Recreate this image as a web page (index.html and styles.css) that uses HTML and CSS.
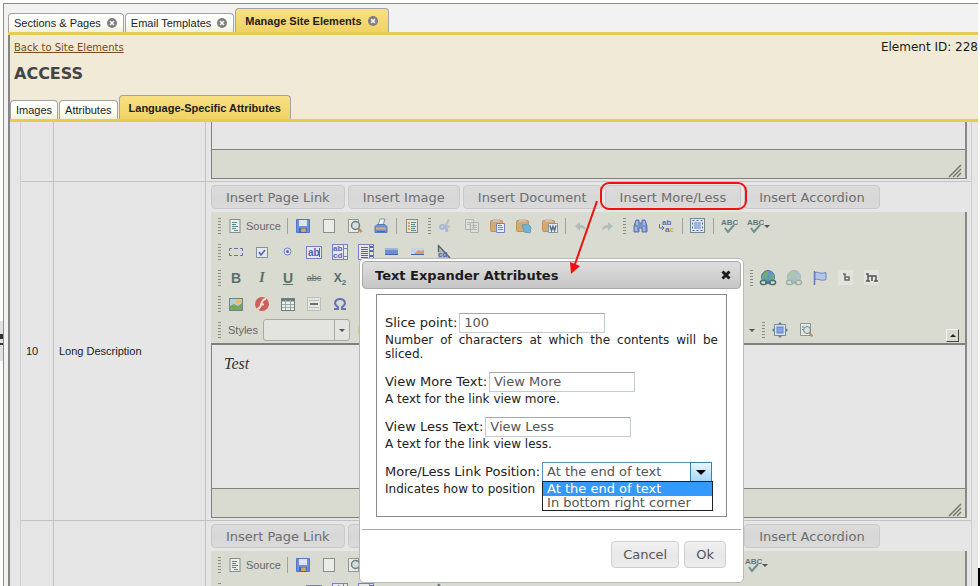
FILE: index.html
```html
<!DOCTYPE html>
<html lang="en">
<head>
<meta charset="utf-8">
<title>Manage Site Elements</title>
<link rel="stylesheet" href="styles.css">
</head>
<body>
<svg class="sprite" aria-hidden="true">
  <symbol id="i-source" viewBox="0 0 18 18"><rect x="4" y="2.500" width="10" height="13" fill="#eceeea" stroke="#829092"/><path d="M6 5.500h5M6 7.500h4M6 9.500h6M6 11.500h4M8 13.500h4" stroke="#5f8488"/></symbol>
  <symbol id="i-save" viewBox="0 0 18 18"><path d="M2.500 2.500h13v13h-13z" fill="#6a90dc" stroke="#5478c4"/><rect x="5" y="3" width="8" height="6" fill="#dde5f0"/><rect x="5" y="11" width="8" height="5" fill="#4c68a4"/><rect x="7" y="11.500" width="5" height="3.500" fill="#e0a14e"/></symbol>
  <symbol id="i-new" viewBox="0 0 18 18"><rect x="3.500" y="2.500" width="11" height="13" fill="#ebece6" stroke="#899092"/></symbol>
  <symbol id="i-preview" viewBox="0 0 18 18"><path d="M2.500 2.500h10v13h-10z" fill="#ebece6" stroke="#8d9799"/><circle cx="9.500" cy="8.500" r="4" fill="#d3dde0" stroke="#6c7e82" stroke-width="1.500"/><path d="M12.500 11.500l3 3.500" stroke="#c98a4b" stroke-width="2.500"/></symbol>
  <symbol id="i-print" viewBox="0 0 18 18"><path d="M6 8l2-6h5l-2 6z" fill="#edf0f2" stroke="#8295ad"/><path d="M3 9.500l2-2h8l2 2v6H3z" fill="#6f91cf" stroke="#5a7bbb"/><path d="M4 11.500h10" stroke="#d8b16b" stroke-width="2"/><path d="M5 14.500h8" stroke="#456ab0"/></symbol>
  <symbol id="i-template" viewBox="0 0 18 18"><rect x="3.500" y="2.500" width="11" height="13" fill="#e4e6df" stroke="#829092"/><path d="M8 5.500h5M8 7.500h4M8 9.500h5M8 11.500h4M8 13.500h5" stroke="#5f8488"/><path d="M6 5v9" stroke="#d8a553" stroke-width="2" stroke-dasharray="2 1"/></symbol>
  <symbol id="i-cut" viewBox="0 0 18 18"><path d="M12 2l-4 8M6 8l7 2" stroke="#b4bfc6" stroke-width="2"/><circle cx="5" cy="10" r="2" fill="none" stroke="#a9b6d8" stroke-width="2"/><path d="M9 10l1 5" stroke="#a9b6d8" stroke-width="3"/></symbol>
  <symbol id="i-copy" viewBox="0 0 18 18"><path d="M2.500 2.500h8v10h-8zM7.500 5.500h8v10h-8z" fill="#dedfd8" stroke="#afb6b2"/><path d="M4 5.500h4M4 7.500h3M9 8.500h5M9 10.500h5M9 12.500h5" stroke="#b4bcba"/></symbol>
  <symbol id="i-paste" viewBox="0 0 18 18"><rect x="1.500" y="3.500" width="12" height="11" rx="1" fill="#d6a970" stroke="#c0935c"/><rect x="4" y="2" width="7" height="3" fill="#bec3c5"/><path d="M7.500 6.500h8v9h-8z" fill="#e9edf4" stroke="#6f86b8"/><path d="M9 8.500h4M9 10.500h5M9 12.500h5" stroke="#6f86b8"/></symbol>
  <symbol id="i-pastetext" viewBox="0 0 18 18"><rect x="1.500" y="3.500" width="12" height="11" rx="1" fill="#d6a970" stroke="#c0935c"/><rect x="4" y="2" width="7" height="3" fill="#bec3c5"/><path d="M7 8l6-1 3 3-1 6-6-1z" fill="#70b3d2" stroke="#679db9"/></symbol>
  <symbol id="i-pasteword" viewBox="0 0 18 18"><rect x="1.500" y="3.500" width="12" height="11" rx="1" fill="#d6a970" stroke="#c0935c"/><rect x="4" y="2" width="7" height="3" fill="#bec3c5"/><path d="M7.500 6.500h9v9h-9z" fill="#e9edf4" stroke="#8395a6"/><path d="M9 8.500l1.500 5 1.500-4 1.500 4 1.500-5" fill="none" stroke="#596b93" stroke-width="1.500"/></symbol>
  <symbol id="i-undo" viewBox="0 0 18 18"><path d="M3 9l5-4v3c4 0 6 2 6 6-1-2-3-3-6-3v3z" fill="#b5bdb8"/></symbol>
  <symbol id="i-redo" viewBox="0 0 18 18"><path d="M15 9l-5-4v3c-4 0-6 2-6 6 1-2 3-3 6-3v3z" fill="#b5bdb8"/></symbol>
  <symbol id="i-find" viewBox="0 0 18 18"><path d="M4 3h3v3h3V3h3l2 6v6h-5v-4H7v4H2V9z" fill="#7b93cd" stroke="#5c74b4"/><path d="M5 4v4M12 4v4M4 10v4M12 10v4" stroke="#d0dbef"/></symbol>
  <symbol id="i-replace" viewBox="0 0 18 18"><text x="4" y="8" class="glyph-sm" fill="#5d6da9">ab</text><text x="7" y="15" class="glyph-sm" fill="#5d6da9">a<tspan fill="#d5a254">c</tspan></text><path d="M1.500 7v4h4M4 9l2 2-2 2" fill="none" stroke="#5d6da9"/></symbol>
  <symbol id="i-selectall" viewBox="0 0 18 18"><rect x="1.500" y="1.500" width="14" height="14" fill="#e4e8e8" stroke="#74898c"/><rect x="5" y="5" width="7" height="7" fill="#9db6e0"/><rect x="3.500" y="3.500" width="10" height="10" fill="none" stroke="#516f9f" stroke-dasharray="2 2"/></symbol>
  <symbol id="i-spell" viewBox="0 0 18 18"><text x="1" y="8" class="glyph-abc" fill="#5e7a7d">ABC</text><path d="M5 11l3 4 6-7" fill="none" stroke="#6d8f90" stroke-width="2"/></symbol>
  <symbol id="i-form" viewBox="0 0 18 18"><path d="M5 5.500H2.500V8M7 5.500h4M13 5.500h2.500V8M2.500 10v2.500H5M7 12.500h4M13 12.500h2.500V10" fill="none" stroke="#6670b2"/></symbol>
  <symbol id="i-check" viewBox="0 0 18 18"><rect x="3.500" y="4.500" width="11" height="10" fill="#e6e8ec" stroke="#7d90b0"/><path d="M6 9l2 3 4-5" fill="none" stroke="#5760b4" stroke-width="1.500"/></symbol>
  <symbol id="i-radio" viewBox="0 0 18 18"><circle cx="8.500" cy="8.500" r="3.500" fill="#e6e8ec" stroke="#7680c8"/><circle cx="8.500" cy="8.500" r="1.500" fill="#5760b4"/></symbol>
  <symbol id="i-text" viewBox="0 0 18 18"><rect x="1.500" y="3.500" width="15" height="12" fill="#e6e8ec" stroke="#7680c8"/><text x="3" y="13" class="glyph-md" fill="#5760b4">ab</text><path d="M14.500 5v9" stroke="#5760b4"/></symbol>
  <symbol id="i-area" viewBox="0 0 18 18"><rect x="1.500" y="1.500" width="15" height="15" fill="#e6e8ec" stroke="#7680c8"/><text x="2" y="8" class="glyph-sm" fill="#5760b4">ab</text><text x="2" y="15" class="glyph-sm" fill="#5760b4">cd</text><path d="M12.500 2v14M13 5.500h3M13 13.500h3" stroke="#7680c8"/></symbol>
  <symbol id="i-select" viewBox="0 0 18 18"><rect x="1.500" y="1.500" width="15" height="15" fill="#e6e8ec" stroke="#7680c8"/><path d="M4 4.500h7M4 6.500h7M4 8.500h7M4 10.500h7M4 12.500h7M4 14.500h7" stroke="#5760b4"/><path d="M12.500 2v14" stroke="#7680c8"/><path d="M13 4h3M13 8h3M13 13h3" stroke="#5760b4" stroke-width="2"/></symbol>
  <symbol id="i-button" viewBox="0 0 18 18"><path d="M2 5h13v7H2z" fill="#6f8fcc"/><path d="M2 5h13v2H2z" fill="#9fb5de"/><path d="M2 11h13v1H2z" fill="#4565b0"/></symbol>
  <symbol id="i-imgbutton" viewBox="0 0 18 18"><path d="M2 5h13v7H2z" fill="#c6d3e4"/><path d="M5 11l4-4 3 1 3-1v4z" fill="#d8a060"/><path d="M2 11h13v1H2z" fill="#4565b0"/></symbol>
  <symbol id="i-hidden" viewBox="0 0 18 18"><path d="M3 2l12 13H3z" fill="#b1b8c6"/><text x="3" y="14" class="glyph-sm" fill="#5760b4">cd</text><path d="M3 2l12 13M3.500 3v6" stroke="#5a6876" stroke-width="1.500"/></symbol>
  <symbol id="i-image" viewBox="0 0 18 18"><rect x="2.500" y="3.500" width="13" height="12" fill="#b4cfe0" stroke="#6f8585"/><path d="M3 15v-4l4-2 4 2 4-3v7z" fill="#7aa658"/><rect x="9" y="5" width="5" height="3" fill="#e5bd60"/></symbol>
  <symbol id="i-flash" viewBox="0 0 18 18"><circle cx="9" cy="9" r="7" fill="#c9605a"/><path d="M13 4c-4 0-4 3-5 6s-2 4-4 4M7 9.500h4" fill="none" stroke="#f1dcd6" stroke-width="2"/></symbol>
  <symbol id="i-table" viewBox="0 0 18 18"><rect x="2.500" y="3.500" width="13" height="12" fill="#eceeea" stroke="#6c7c80"/><path d="M2 5h14" stroke="#6c7c80" stroke-width="3"/><path d="M6.500 5v10M11.500 5v10M3 9.500h12M3 12.500h12" stroke="#9daaab"/></symbol>
  <symbol id="i-rule" viewBox="0 0 18 18"><rect x="2.500" y="2.500" width="13" height="13" fill="#e4e5df" stroke="#b9bfbe"/><path d="M4 5.500h10M4 12.500h10" stroke="#b9bfbe"/><path d="M5 9h8" stroke="#60777a" stroke-width="2"/></symbol>
  <symbol id="i-omega" viewBox="0 0 18 18"><path d="M3 14h4v-2C2 9 4 4 9 4s7 5 2 8v2h4" fill="none" stroke="#6270b8" stroke-width="2"/></symbol>
  <symbol id="i-link" viewBox="0 0 18 18"><circle cx="9" cy="8" r="6.500" fill="#6394d0" stroke="#527c9a"/><path d="M5 4l3-2 2 3-3 4-4 1zM11 6l4-1v5l-3 1z" fill="#6fb068"/><rect x="1.500" y="11.500" width="6" height="4" rx="2" fill="#d3e0dc" stroke="#47706c" stroke-width="1.500"/><rect x="10.500" y="11.500" width="6" height="4" rx="2" fill="#d3e0dc" stroke="#47706c" stroke-width="1.500"/><path d="M6 13.500h6" stroke="#47706c" stroke-width="1.500"/></symbol>
  <symbol id="i-flag" viewBox="0 0 18 18"><path d="M3.500 2v14" stroke="#6378b4" stroke-width="1.500"/><path d="M4 3.500c4-1 5 2 11 0v7c-5 2-7-1-11 0z" fill="#b1c5e6" stroke="#6e85c2"/></symbol>
  <symbol id="i-glyph-b" viewBox="0 0 18 18"><rect x="1" y="1" width="15" height="15" fill="#e3e3dd"/><path d="M6 5h2v6h4V8H8" fill="none" stroke="#666" stroke-width="1.500"/></symbol>
  <symbol id="i-glyph-m" viewBox="0 0 18 18"><rect x="1" y="1" width="15" height="15" fill="#e3e3dd"/><path d="M3 5h2v7M5 7h4v5M9 7h4v5M3 12h4M11 12h4" fill="none" stroke="#555" stroke-width="1.500"/></symbol>
  <symbol id="i-maximize" viewBox="0 0 18 18"><path d="M9 1l3 3H6zM9 17l3-3H6zM1 9l3-3v6zM17 9l-3-3v6z" fill="#668591"/><rect x="3.500" y="3.500" width="11" height="11" fill="#dce4e9" stroke="#708c9b"/><rect x="6" y="6" width="6" height="6" fill="#83a7e4" stroke="#5b83ca"/></symbol>
  <symbol id="i-blocks" viewBox="0 0 18 18"><path d="M3.500 2.500h10v12h-10z" fill="#e6e8e2" stroke="#8b9698"/><path d="M5 6h2M5 8.500h3" stroke="#6c8082"/><circle cx="10" cy="9" r="3.500" fill="#d5e0e0" stroke="#758789"/><path d="M12.500 12l3 3.500" stroke="#c98a4b" stroke-width="2"/></symbol>
  <symbol id="i-close" viewBox="0 0 12 12"><circle cx="6" cy="6" r="5" fill="#7f7f7f"/><path d="M4 4l4 4M8 4L4 8" stroke="#fff" stroke-width="1.500"/></symbol>
  <symbol id="i-resize" viewBox="0 0 14 14"><path d="M1 13L13 1M5 13l8-8M9 13l4-4" stroke="#77786c" stroke-width="1.500"/></symbol>
</svg>

<main class="page">
  <div class="frame">
    <nav class="tabs tabs--main" aria-label="Site tabs">
      <a class="tab" href="#pages">Sections &amp; Pages <svg class="tab__x"><use href="#i-close"/></svg></a>
      <a class="tab" href="#email">Email Templates <svg class="tab__x"><use href="#i-close"/></svg></a>
      <a class="tab tab--active" href="#elements">Manage Site Elements <svg class="tab__x"><use href="#i-close"/></svg></a>
    </nav>
    <div class="panel">
      <header class="head">
        <div class="head__row">
          <a class="back" href="#back">Back to Site Elements</a>
          <span class="element-id">Element ID: 228</span>
        </div>
        <h1>ACCESS</h1>
      </header>
      <nav class="tabs tabs--sub" aria-label="Element tabs">
        <a class="tab" href="#images">Images</a>
        <a class="tab" href="#attributes">Attributes</a>
        <a class="tab tab--active" href="#language">Language-Specific Attributes</a>
      </nav>
      <div class="content">
        <table class="grid">
          <colgroup><col class="col-num"><col class="col-name"><col></colgroup>
          <tbody>
          <tr>
            <td></td><td></td>
            <td class="cell-editor cell-editor--tail">
              <div class="editor">
                <div class="editor__body editor__body--tail"></div>
                <div class="editor__foot"><svg class="grab"><use href="#i-resize"/></svg></div>
              </div>
            </td>
          </tr>
          <tr>
            <td>10</td><td>Long Description</td>
            <td class="cell-editor">
              <div class="inserts">
                <button type="button">Insert Page Link</button>
                <button type="button">Insert Image</button>
                <button type="button">Insert Document</button>
                <button type="button">Insert More/Less</button>
                <button type="button">Insert Accordion</button>
              </div>
              <div class="editor">
                <div class="toolbar">
                  <div class="tools">
                    <i class="grip"></i><button type="button" class="tool tool--source"><svg><use href="#i-source"/></svg>Source</button><i class="sep"></i>
                    <button type="button" class="tool" aria-label="Save"><svg><use href="#i-save"/></svg></button>
                    <button type="button" class="tool" aria-label="New page"><svg><use href="#i-new"/></svg></button>
                    <button type="button" class="tool" aria-label="Preview"><svg><use href="#i-preview"/></svg></button>
                    <button type="button" class="tool" aria-label="Print"><svg><use href="#i-print"/></svg></button><i class="sep"></i>
                    <button type="button" class="tool" aria-label="Templates"><svg><use href="#i-template"/></svg></button><i class="grip"></i>
                    <button type="button" class="tool" aria-label="Cut"><svg><use href="#i-cut"/></svg></button>
                    <button type="button" class="tool" aria-label="Copy"><svg><use href="#i-copy"/></svg></button>
                    <button type="button" class="tool" aria-label="Paste"><svg><use href="#i-paste"/></svg></button>
                    <button type="button" class="tool" aria-label="Paste as text"><svg><use href="#i-pastetext"/></svg></button>
                    <button type="button" class="tool" aria-label="Paste from Word"><svg><use href="#i-pasteword"/></svg></button><i class="sep"></i>
                    <button type="button" class="tool" aria-label="Undo"><svg><use href="#i-undo"/></svg></button>
                    <button type="button" class="tool" aria-label="Redo"><svg><use href="#i-redo"/></svg></button><i class="grip"></i>
                    <button type="button" class="tool" aria-label="Find"><svg><use href="#i-find"/></svg></button>
                    <button type="button" class="tool" aria-label="Replace"><svg><use href="#i-replace"/></svg></button><i class="sep"></i>
                    <button type="button" class="tool" aria-label="Select all"><svg><use href="#i-selectall"/></svg></button><i class="sep"></i>
                    <button type="button" class="tool" aria-label="Check spelling"><svg><use href="#i-spell"/></svg></button>
                    <button type="button" class="tool tool--menu" aria-label="Spell check as you type"><svg><use href="#i-spell"/></svg></button>
                  </div>
                  <div class="tools">
                    <i class="grip"></i>
                    <button type="button" class="tool" aria-label="Form"><svg><use href="#i-form"/></svg></button>
                    <button type="button" class="tool" aria-label="Checkbox"><svg><use href="#i-check"/></svg></button>
                    <button type="button" class="tool" aria-label="Radio button"><svg><use href="#i-radio"/></svg></button>
                    <button type="button" class="tool" aria-label="Text field"><svg><use href="#i-text"/></svg></button>
                    <button type="button" class="tool" aria-label="Text area"><svg><use href="#i-area"/></svg></button>
                    <button type="button" class="tool" aria-label="Selection field"><svg><use href="#i-select"/></svg></button>
                    <button type="button" class="tool" aria-label="Button"><svg><use href="#i-button"/></svg></button>
                    <button type="button" class="tool" aria-label="Image button"><svg><use href="#i-imgbutton"/></svg></button>
                    <button type="button" class="tool" aria-label="Hidden field"><svg><use href="#i-hidden"/></svg></button>
                  </div>
                  <div class="tools">
                    <i class="grip"></i>
                    <button type="button" class="tool tool--b">B</button>
                    <button type="button" class="tool tool--i">I</button>
                    <button type="button" class="tool tool--u">U</button>
                    <button type="button" class="tool tool--s">abc</button>
                    <button type="button" class="tool tool--sub"><span>X<sub>2</sub></span></button>
                    <div class="tools__end tools__end--links">
                      <i class="grip"></i>
                      <button type="button" class="tool" aria-label="Link"><svg><use href="#i-link"/></svg></button>
                      <button type="button" class="tool tool--off" aria-label="Unlink" disabled><svg><use href="#i-link"/></svg></button>
                      <button type="button" class="tool" aria-label="Anchor"><svg><use href="#i-flag"/></svg></button>
                      <button type="button" class="tool" aria-label="Less"><svg><use href="#i-glyph-b"/></svg></button>
                      <button type="button" class="tool" aria-label="More"><svg><use href="#i-glyph-m"/></svg></button>
                    </div>
                  </div>
                  <div class="tools">
                    <i class="grip"></i>
                    <button type="button" class="tool" aria-label="Image"><svg><use href="#i-image"/></svg></button>
                    <button type="button" class="tool" aria-label="Flash"><svg><use href="#i-flash"/></svg></button>
                    <button type="button" class="tool" aria-label="Table"><svg><use href="#i-table"/></svg></button>
                    <button type="button" class="tool" aria-label="Horizontal line"><svg><use href="#i-rule"/></svg></button>
                    <button type="button" class="tool" aria-label="Special character"><svg><use href="#i-omega"/></svg></button>
                  </div>
                  <div class="tools">
                    <i class="grip"></i>
                    <label class="styles-label" for="styles">Styles</label>
                    <span class="combo"><select id="styles"><option></option></select></span>
                    <span class="styles-label">F</span>
                    <div class="tools__end tools__end--view">
                      <i class="caret"></i><i class="grip"></i>
                      <button type="button" class="tool" aria-label="Maximize"><svg><use href="#i-maximize"/></svg></button>
                      <button type="button" class="tool" aria-label="Show blocks"><svg><use href="#i-blocks"/></svg></button>
                    </div>
                    <button type="button" class="collapse" aria-label="Collapse toolbar"></button>
                  </div>
                </div>
                <div class="editor__body"><p>Test</p></div>
                <div class="editor__foot"><svg class="grab"><use href="#i-resize"/></svg></div>
              </div>
            </td>
          </tr>
          <tr>
            <td></td><td></td>
            <td class="cell-editor">
              <div class="inserts">
                <button type="button">Insert Page Link</button>
                <button type="button">Insert Image</button>
                <button type="button">Insert Document</button>
                <button type="button">Insert More/Less</button>
                <button type="button">Insert Accordion</button>
              </div>
              <div class="editor">
                <div class="toolbar">
                  <div class="tools">
                    <i class="grip"></i><button type="button" class="tool tool--source"><svg><use href="#i-source"/></svg>Source</button><i class="sep"></i>
                    <button type="button" class="tool" aria-label="Save"><svg><use href="#i-save"/></svg></button>
                    <button type="button" class="tool" aria-label="New page"><svg><use href="#i-new"/></svg></button>
                    <button type="button" class="tool" aria-label="Preview"><svg><use href="#i-preview"/></svg></button>
                    <div class="tools__end tools__end--spell">
                      <button type="button" class="tool tool--menu" aria-label="Spell check as you type"><svg><use href="#i-spell"/></svg></button>
                    </div>
                  </div>
                  <div class="tools">
                    <i class="grip"></i>
                    <button type="button" class="tool" aria-label="Form"><svg><use href="#i-form"/></svg></button>
                    <button type="button" class="tool" aria-label="Checkbox"><svg><use href="#i-check"/></svg></button>
                    <button type="button" class="tool" aria-label="Radio button"><svg><use href="#i-radio"/></svg></button>
                    <button type="button" class="tool" aria-label="Text field"><svg><use href="#i-text"/></svg></button>
                    <button type="button" class="tool" aria-label="Text area"><svg><use href="#i-area"/></svg></button>
                    <button type="button" class="tool" aria-label="Selection field"><svg><use href="#i-select"/></svg></button>
                    <button type="button" class="tool" aria-label="Button"><svg><use href="#i-button"/></svg></button>
                    <button type="button" class="tool" aria-label="Image button"><svg><use href="#i-imgbutton"/></svg></button>
                    <button type="button" class="tool" aria-label="Hidden field"><svg><use href="#i-hidden"/></svg></button>
                  </div>
                </div>
              </div>
            </td>
          </tr>
          </tbody>
        </table>
      </div>
    </div>
  </div>

  <section class="dialog" role="dialog" aria-labelledby="dialog-title">
    <header class="dialog__title">
      <h2 id="dialog-title">Text Expander Attributes</h2>
      <button type="button" class="dialog__close" aria-label="Close"><svg viewBox="0 0 10 10"><path d="M1.500 1.500l7 7M8.500 1.500l-7 7" stroke="#1c1c1c" stroke-width="3"/></svg></button>
    </header>
    <form class="form">
      <div class="field">
        <div class="field__row"><label for="slice">Slice point:</label><input id="slice" type="text" value="100"></div>
        <p>Number of characters at which the contents will be sliced.</p>
      </div>
      <div class="field">
        <div class="field__row"><label for="more">View More Text:</label><input id="more" type="text" value="View More"></div>
        <p>A text for the link view more.</p>
      </div>
      <div class="field">
        <div class="field__row"><label for="less">View Less Text:</label><input id="less" type="text" value="View Less"></div>
        <p>A text for the link view less.</p>
      </div>
      <div class="field">
        <div class="field__row"><label for="position">More/Less Link Position:</label>
          <span class="drop">
            <select id="position"><option>At the end of text</option><option>In bottom right corner</option></select>
            <span class="drop__arrow"></span>
            <ul class="drop__list" role="listbox" aria-label="Link position">
              <li role="option" aria-selected="true">At the end of text</li>
              <li role="option" aria-selected="false">In bottom right corner</li>
            </ul>
          </span>
        </div>
        <p>Indicates how to position</p>
      </div>
    </form>
    <footer class="dialog__foot">
      <button type="button">Cancel</button>
      <button type="button">Ok</button>
    </footer>
  </section>

  <svg class="callout" viewBox="0 0 180 96" aria-hidden="true">
    <rect x="31" y="3" width="145" height="26" rx="8" fill="none" stroke="#f01010" stroke-width="2"/>
    <path d="M27 21L4 87" stroke="#f01010" stroke-width="2"/>
    <path d="M1 94l-1-12 10 4z" fill="#f01010"/>
  </svg>
  <i class="edge-mark edge-mark--left"></i>
  <i class="edge-mark edge-mark--right"></i>
</main>
</body>
</html>
```
FILE: styles.css
```css
* { box-sizing: border-box; }
body { margin: 0; background: #fdfdfb; color: #222; font-family: "DejaVu Sans", sans-serif; font-size: 12px; }
h1, h2, p, ul { margin: 0; padding: 0; }
button, input, select { font-family: inherit; font-size: inherit; margin: 0; }
.sprite { display: none; }
.glyph-sm { font: bold 8px "Liberation Sans", sans-serif; }
.glyph-md { font: bold 10px "Liberation Sans", sans-serif; }
.glyph-abc { font: bold 8px "Liberation Sans", sans-serif; }

.page { position: relative; height: 100vh; padding: 3px 2px 0 3px; overflow: hidden; }
.frame { display: flex; flex-direction: column; height: 100%; padding-left: 4px; border: solid #8c8c8c; border-width: 1px 0 0 1px; background: #f2f2f2; }

.tabs { display: flex; align-items: flex-end; gap: 1px; border-bottom: 3px solid #e8cb54; font-family: "Liberation Sans", sans-serif; font-size: 11px; }
.tabs--main { height: 31px; }
.tabs--sub { height: 26px; }
.tab { display: flex; align-items: center; gap: 5px; height: 19px; padding: 0 5px; border: 1px solid #a3a3a3; border-bottom: 0; border-radius: 4px 4px 0 0; background: linear-gradient(#fff, #fdfdf4 60%, #f0f0dc); color: #1c1c1c; text-decoration: none; }
.tabs .tab--active { height: 24px; padding: 0 9px; background: linear-gradient(#f8e083, #f0d265); font-weight: bold; }
.tab__x { width: 12px; height: 12px; }

.panel { display: flex; flex: 1; flex-direction: column; min-height: 0; border-left: 2px solid #858585; background: #f1ead6; }
.head { height: 61px; padding: 6px 0 0 4px; }
.head__row { display: flex; justify-content: space-between; line-height: 13px; }
.back { color: #7b4a20; font-size: 10px; }
.element-id { font-size: 12px; color: #1a1a1a; }
h1 { margin-top: 10px; color: #444; font-size: 16px; line-height: 20px; }

.content { flex: 1; min-height: 0; overflow: hidden; padding: 0 6px 0 10px; background: #e6e6e6; }
.grid { width: 100%; border-collapse: separate; border-spacing: 0; table-layout: fixed; border: solid #cfcfcd; border-width: 0 1px; font: 11px "Liberation Sans", sans-serif; }
.col-num { width: 33px; }
.col-name { width: 152px; }
.grid td { padding: 0 5px; border-right: 1px solid #c3c4c0; border-bottom: 1px solid #c3c4c0; vertical-align: middle; }
.grid td:last-child { border-right: 0; }
.grid .cell-editor { padding: 3px 4px 2px 5px; vertical-align: top; }
.grid .cell-editor--tail { padding-top: 0; }

.inserts { display: flex; gap: 3px; margin-bottom: 3px; }
.inserts button { height: 24px; padding: 0 14px; border: 1px solid #c9c9c9; border-radius: 4px; background: linear-gradient(#dcdcdc, #d7d7d7 50%, #dadada); color: #6e6e6e; font-family: "DejaVu Sans", sans-serif; font-size: 13px; }

.editor { border-right: 2px solid #888; }
.toolbar { padding: 1px 4px 0; border-bottom: 2px solid #808080; background: #dadbd0; }
.tools { display: flex; align-items: center; height: 26px; }
.grip { flex: none; width: 3px; height: 16px; margin: 0 2px 0 3px; background: repeating-linear-gradient(#8d8e83 0 1px, transparent 1px 3px); }
.sep { flex: none; width: 1px; height: 16px; margin: 0 2px; background: #a0a198; }
.tool { display: flex; flex: none; align-items: center; justify-content: center; width: 26px; height: 26px; padding: 0; border: 0; background: none; color: #55716c; font-size: 13px; }
.tool svg { width: 18px; height: 18px; }
.tool--source { justify-content: flex-start; gap: 2px; width: 62px; padding-left: 3px; color: #666; font-family: "Liberation Sans", sans-serif; font-size: 11px; }
.tool--b { font-size: 14px; font-weight: bold; }
.tool--i { font: italic bold 14px "Liberation Serif", serif; }
.tool--u { font-size: 14px; font-weight: bold; text-decoration: underline; }
.tool--s { font-size: 9px; text-decoration: line-through; }
.tool--sub { font-size: 12px; font-weight: bold; }
.tool--sub sub { font-size: 8px; line-height: 0; }
.tool--off { opacity: .4; }
.tool--menu { width: 34px; justify-content: flex-start; padding-left: 4px; }
.caret, .tool--menu::after { flex: none; width: 0; border: solid transparent; border-width: 3px 3px 0; border-top-color: #555; content: ""; }
.tools__end { display: flex; align-items: center; }
.tools__end--links { margin-left: 394px; }
.tools__end--view { margin-left: 379px; }
.tools__end--view .grip { margin-left: 7px; }
.tools__end--spell { margin-left: 372px; }
.styles-label { padding: 0 5px; color: #666; font-size: 11px; }
.combo { position: relative; display: flex; width: 87px; height: 22px; margin-right: 3px; }
.combo select { width: 100%; border: 1px solid #aaaba0; border-radius: 3px; background: #e3e3df; appearance: none; }
.combo::before { position: absolute; top: 1px; right: 15px; bottom: 1px; border-left: 1px solid #aaaba0; content: ""; }
.combo::after { position: absolute; top: 10px; right: 5px; border: solid transparent; border-width: 3px 3px 0; border-top-color: #555; content: ""; }
.collapse { align-self: flex-end; width: 13px; height: 13px; margin: 0 2px 1px auto; padding: 0; border: 1px solid; border-color: #f4f4ee #444 #444 #f4f4ee; background: #dadbd0; display: grid; place-items: center; }
.collapse::after { border: solid transparent; border-width: 0 3px 3px; border-bottom-color: #222; content: ""; }
.editor__body { height: 143px; padding: 10px 12px; border-left: 1px solid #808080; background: #e6e6e6; color: #333; font: italic 16px/18px "Liberation Serif", serif; }
.editor__body--tail { height: 27px; padding: 0; }
.editor__foot { display: flex; align-items: flex-end; justify-content: flex-end; height: 30px; padding-right: 3px; border: solid #808080; border-width: 1px 0 1px 1px; background: #dadbd0; }
.grab { width: 14px; height: 14px; }

.dialog { position: absolute; top: 258px; left: 359px; width: 385px; padding: 2px; border: 1px solid #b9b9b9; border-radius: 5px; background: #fff; }
.dialog__title { display: flex; align-items: center; justify-content: space-between; height: 28px; padding: 0 9px 0 12px; border: 1px solid #a9a9a9; border-radius: 4px; background: linear-gradient(#dedede, #c6c6c6); }
h2 { color: #1c1c1c; font-size: 13px; }
.dialog__close { display: flex; padding: 0; border: 0; background: none; }
.dialog__close svg { width: 10px; height: 10px; }
.form { display: flex; flex-direction: column; gap: 10px; margin: 5px 14px 12px; padding: 17px 8px 20px; border: 1px solid #8a8a8a; }
.field__row { display: flex; align-items: center; gap: 2px; height: 21px; font-size: 13px; }
.field p { line-height: 14px; text-align: justify; }
.form input { width: 146px; height: 20px; padding: 0 4px; border: 1px solid #c5cad4; border-top-color: #a5a8ae; color: #555; }
.drop { position: relative; display: flex; flex: none; width: 170px; height: 20px; }
.drop select { width: 100%; padding: 0 4px; border: 1px solid #5794bf; border-radius: 0; background: #fff; color: #555; appearance: none; }
.drop__arrow { position: absolute; top: 0; right: 0; width: 22px; height: 20px; border: 1px solid #3c7fb1; background: linear-gradient(#e9f6fd, #a6d9f4); pointer-events: none; }
.drop__arrow::after { position: absolute; top: 7px; left: 5px; border: solid transparent; border-width: 5px 5px 0; border-top-color: #000; content: ""; }
.drop__list { position: absolute; top: 19px; left: 0; width: 171px; border: 1px solid #222; background: #fff; color: #555; line-height: 14px; list-style: none; white-space: nowrap; }
.drop__list li { padding: 0 4px; }
.drop__list [aria-selected="true"] { background: #3399ff; color: #fff; }
.dialog__foot { display: flex; justify-content: flex-end; gap: 5px; padding: 11px 15px 12px; border-top: 1px solid #a8a8a8; }
.dialog__foot button { height: 27px; padding: 0 11px; border: 1px solid #cfcfcf; border-radius: 4px; background: linear-gradient(#f1f1f1, #e8e8e8 50%, #ececec); color: #555; font-size: 13px; }

.callout { position: absolute; top: 180px; left: 570px; width: 180px; height: 96px; pointer-events: none; }
.edge-mark { position: absolute; }
.edge-mark--right { right: 0; bottom: 0; width: 2px; height: 18px; background: #000; }
.edge-mark--left { top: 321px; left: 0; width: 3px; height: 40px; background: linear-gradient(#e2e2e2 13px, #333 13px 18px, #e2e2e2 18px 22px, #333 22px 24px, #e2e2e2 24px); }
```
